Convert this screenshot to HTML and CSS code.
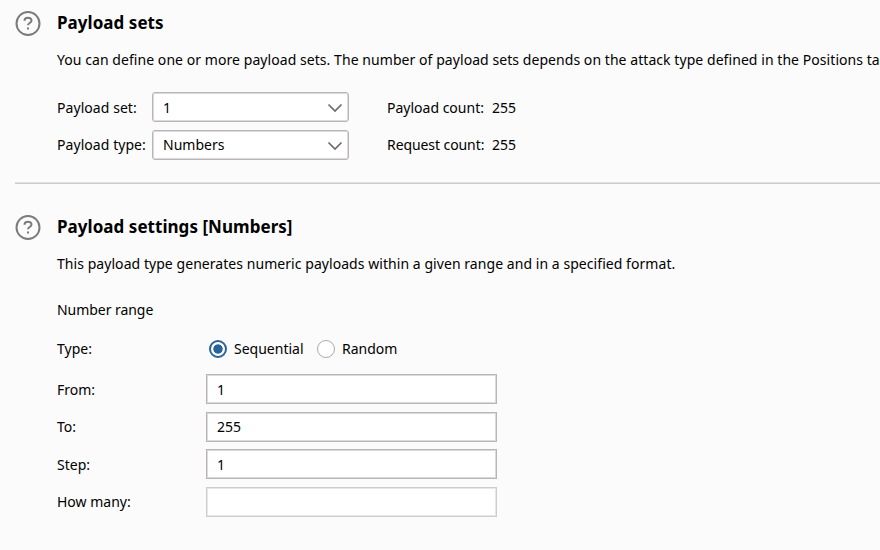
FILE: index.html
```html
<!DOCTYPE html>
<html lang="en"><head><meta charset="utf-8"><title>Payloads</title><link rel="stylesheet" href="styles.css"></head>
<body>
<main>
<section class="sets">
 <svg class="help" viewBox="0 0 26 26"><circle cx="13" cy="13.500" r="11.500"/><path d="M9.500 10.800c0-4 7-4 7-.3 0 2.500-3.500 2.500-3.500 4.700"/><path d="M12 18.500h2"/></svg>
 <div class="body">
  <h2>Payload sets</h2>
  <p class="long">You can define one or more payload sets. The number of payload sets depends on the attack type defined in the Positions tab.</p>
  <div class="pick first"><label>Payload set:</label><div class="select"><span>1</span><svg viewBox="0 0 16 10"><path d="M1.500 1.500 8 8l6.500-6.500"/></svg></div><span class="count">Payload count:</span><span>255</span></div>
  <div class="pick"><label>Payload type:</label><div class="select"><span>Numbers</span><svg viewBox="0 0 16 10"><path d="M1.500 1.500 8 8l6.500-6.500"/></svg></div><span class="count request">Request count:</span><span>255</span></div>
 </div>
</section>
<hr>
<section class="settings">
 <svg class="help" viewBox="0 0 26 26"><circle cx="13" cy="13.500" r="11.500"/><path d="M9.500 10.800c0-4 7-4 7-.3 0 2.500-3.500 2.500-3.500 4.700"/><path d="M12 18.500h2"/></svg>
 <div class="body">
  <h2>Payload settings [Numbers]</h2>
  <p>This payload type generates numeric payloads within a given range and in a specified format.</p>
  <h3>Number range</h3>
  <div class="row type"><label>Type:</label><i class="radio on"></i><span class="seq">Sequential</span><i class="radio"></i><span>Random</span></div>
  <div class="row low"><label>From:</label><div class="field">1</div></div>
  <div class="row"><label>To:</label><div class="field">255</div></div>
  <div class="row low"><label>Step:</label><div class="field">1</div></div>
  <div class="row"><label>How many:</label><div class="field off"></div></div>
 </div>
</section>
</main>
</body></html>
```
FILE: styles.css
```css
*{box-sizing:border-box}
body{margin:0;background:#fbfbfb;color:#000;font:14px/20px "Noto Sans","Open Sans",sans-serif;overflow:hidden}
main{width:880px;height:550px;overflow:hidden;padding:10px 0 0 15px}
section{display:flex;gap:16px}
.sets{height:172px}
.help{width:26px;height:26px;flex:none;fill:none;stroke:#7b7b7b;stroke-width:2}
.body{flex:1;min-width:0;white-space:nowrap}
h2{margin:0;font-size:17px;line-height:26px;font-weight:700;letter-spacing:.04px}
p{margin:14px 0 0;letter-spacing:.055px}
.long{letter-spacing:.06px}
.pick{display:flex;align-items:center;height:30px;margin-top:8px}
.pick.first{margin-top:22px}
.first label,.first span{padding-top:2px}
.pick label{width:95px;letter-spacing:.06px}
.select{width:197px;height:30px;border:1px solid #b9b4b6;box-shadow:inset 0 0 0 1px #dedadc;border-radius:3px;background:#fff;display:flex;align-items:center;justify-content:space-between;padding:0 5px 0 10px}
.select svg{width:16px;height:10px;fill:none;stroke:#6c6c6c;stroke-width:1.700;margin-top:2px}
.count{width:105px;margin-left:38px}
.request{letter-spacing:-.08px}
hr{border:0;height:2px;margin:0;background:linear-gradient(#e4e4e4 50%,#cbcbcb 50%)}
.settings{padding-top:30px}
h3{margin:26px 0 0;font-size:14px;font-weight:400;line-height:20px;letter-spacing:-.05px}
.row{display:flex;align-items:center;height:30px;margin-bottom:7.600px}
.row label{width:149px}
.low label{padding-top:2px}
.type{margin:14px 0 10px}
.radio{width:18px;height:18px;border:1px solid #aaa;border-radius:50%;background:#fff;margin:0 7px 0 3px}
.radio.on{border:2px solid #286499;background:radial-gradient(circle,#286499 0 4.300px,#fff 5px)}
.seq{width:70px;margin-right:10px}
.field{width:291px;height:30px;border:1px solid #b9b4b6;box-shadow:inset 0 0 0 1px #dedadc;background:#fff;padding:4px 10px}
.low .field{padding-top:5px}
.off{border-color:#cdcdcd;box-shadow:inset 0 0 0 1px #e7e7e7}
```
